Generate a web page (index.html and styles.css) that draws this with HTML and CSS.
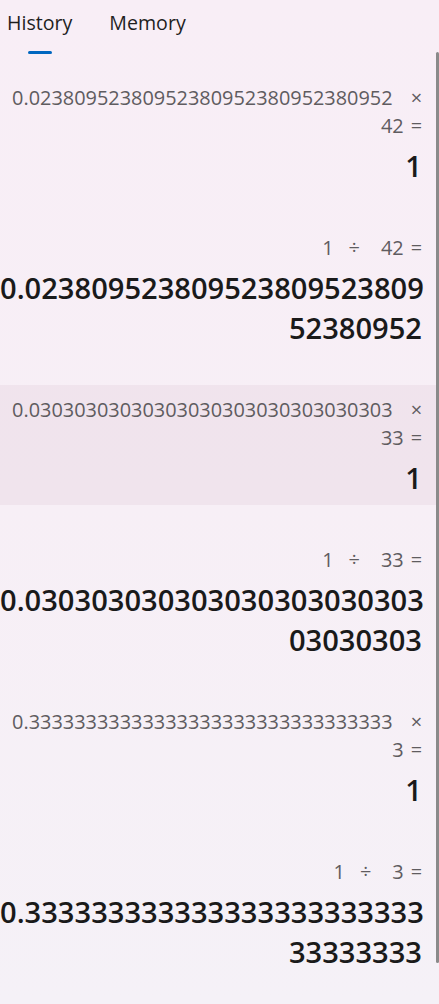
FILE: index.html
```html
<!DOCTYPE html>
<html lang="en">

<head>
    <meta charset="UTF-8">
    <title>History</title>
    <meta name="viewport" content="width=device-width, initial-scale=1.0">
    <link rel="stylesheet" href="styles.css">
</head>

<body>

    <div class="tabs">
        <div class="tab active">
            <span class="tab-label">History</span>
            <span class="indicator"></span>
        </div>
        <div class="tab">
            <span class="tab-label">Memory</span>
            <span class="indicator"></span>
        </div>
    </div>

    <div class="history">
        <div class="item">
            <div class="expr">
                <div class="line">0.02380952380952380952380952380952<span class="op times">×</span></div>
                <div class="line">42<span class="op eq">=</span></div>
            </div>
            <div class="result">
                <div class="line">1</div>
            </div>
        </div>

        <div class="item">
            <div class="expr">
                <div class="line">1<span class="op div">÷</span><span class="num">42</span><span class="op eq">=</span></div>
            </div>
            <div class="result">
                <div class="line">0.023809523809523809523809</div>
                <div class="line">52380952</div>
            </div>
        </div>

        <div class="item hovered">
            <div class="expr">
                <div class="line">0.03030303030303030303030303030303<span class="op times">×</span></div>
                <div class="line">33<span class="op eq">=</span></div>
            </div>
            <div class="result">
                <div class="line">1</div>
            </div>
        </div>

        <div class="item">
            <div class="expr">
                <div class="line">1<span class="op div">÷</span><span class="num">33</span><span class="op eq">=</span></div>
            </div>
            <div class="result">
                <div class="line">0.030303030303030303030303</div>
                <div class="line">03030303</div>
            </div>
        </div>

        <div class="item">
            <div class="expr">
                <div class="line">0.33333333333333333333333333333333<span class="op times">×</span></div>
                <div class="line">3<span class="op eq">=</span></div>
            </div>
            <div class="result">
                <div class="line">1</div>
            </div>
        </div>

        <div class="item">
            <div class="expr">
                <div class="line">1<span class="op div">÷</span><span class="num">3</span><span class="op eq">=</span></div>
            </div>
            <div class="result">
                <div class="line">0.333333333333333333333333</div>
                <div class="line">33333333</div>
            </div>
        </div>
    </div>

    <div class="scrollbar"></div>

</body>

</html>
```

FILE: styles.css
```css
html,
body {
    height: 100%;
}

body {
    margin: 0;
    position: relative;
    overflow: hidden;
    font-family: "Open Sans", "Noto Sans", sans-serif;
    background: linear-gradient(180deg, #f8eef6 0%, #f7eff6 50%, #f5f1f7 100%);
    color: #1b1b1b;
}

/* tabs */
.tabs {
    display: flex;
    gap: 37px;
    padding: 9px 0 19px 7px;
}

.tab {
    display: flex;
    flex-direction: column;
    align-items: center;
}

.tab-label {
    font-size: 19.6px;
    line-height: 28px;
    color: #1f1f1f;
}

.indicator {
    width: 24px;
    height: 3px;
    margin-top: 14px;
    border-radius: 2px;
    background: transparent;
}

.tab.active .indicator {
    background: #0067c0;
}

/* history list */
.history {
    display: flex;
    flex-direction: column;
    gap: 30px;
}

.item {
    padding: 11px 17px 7px 0;
    text-align: right;
    white-space: nowrap;
}

.item.hovered {
    background: rgba(120, 60, 100, 0.055);
}

.expr {
    font-size: 19.9px;
    line-height: 28px;
    color: #5f5c60;
}

.op.times {
    margin-left: 18px;
}

.op.eq {
    margin-left: 7px;
}

.op.div {
    margin-left: 15px;
}

.num {
    margin-left: 21px;
}

.result {
    margin-top: 6px;
    font-size: 29.1px;
    font-weight: 600;
    line-height: 40px;
    color: #1a1a1a;
}

.scrollbar {
    position: absolute;
    top: 52px;
    bottom: 41px;
    right: 0;
    width: 3px;
    border-radius: 2px;
    background: #8a8a8a;
}
```
